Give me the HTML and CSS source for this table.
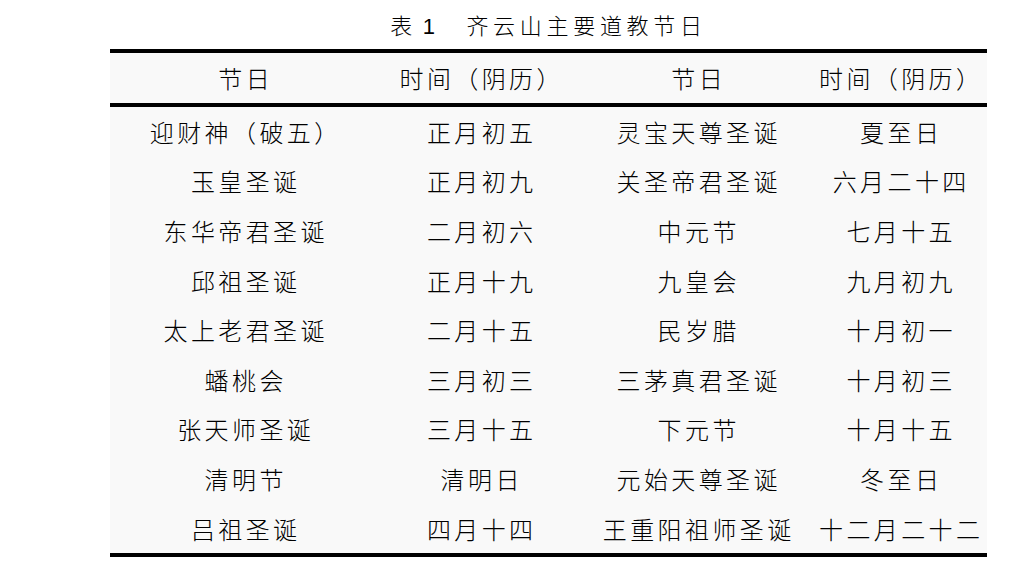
FILE: index.html
```html
<!DOCTYPE html>
<html lang="zh-CN">
<head>
<meta charset="utf-8">
<title>齐云山主要道教节日</title>
<link rel="stylesheet" href="styles.css">
</head>
<body>
<div class="page">
  <h1 class="caption">表 1　齐云山主要道教节日</h1>
  <table class="fest">
    <colgroup>
      <col class="c1"><col class="c2"><col class="c3"><col class="c4">
    </colgroup>
    <thead>
      <tr><th>节日</th><th>时间（阴历）</th><th>节日</th><th>时间（阴历）</th></tr>
    </thead>
    <tbody>
      <tr><td>迎财神（破五）</td><td>正月初五</td><td>灵宝天尊圣诞</td><td>夏至日</td></tr>
      <tr><td>玉皇圣诞</td><td>正月初九</td><td>关圣帝君圣诞</td><td>六月二十四</td></tr>
      <tr><td>东华帝君圣诞</td><td>二月初六</td><td>中元节</td><td>七月十五</td></tr>
      <tr><td>邱祖圣诞</td><td>正月十九</td><td>九皇会</td><td>九月初九</td></tr>
      <tr><td>太上老君圣诞</td><td>二月十五</td><td>民岁腊</td><td>十月初一</td></tr>
      <tr><td>蟠桃会</td><td>三月初三</td><td>三茅真君圣诞</td><td>十月初三</td></tr>
      <tr><td>张天师圣诞</td><td>三月十五</td><td>下元节</td><td>十月十五</td></tr>
      <tr><td>清明节</td><td>清明日</td><td>元始天尊圣诞</td><td>冬至日</td></tr>
      <tr><td>吕祖圣诞</td><td>四月十四</td><td>王重阳祖师圣诞</td><td>十二月二十二</td></tr>
    </tbody>
  </table>
</div>
</body>
</html>
```

FILE: styles.css
```css
html, body {
  margin: 0;
  padding: 0;
  background: #ffffff;
}

.page {
  width: 877px;
  margin-left: 110px;
  padding-top: 13px;
}

.caption {
  margin: 0 0 8px 0;
  height: 28px;
  line-height: 28px;
  font-family: "Liberation Sans", "Noto Sans CJK SC", sans-serif;
  font-size: 22px;
  font-weight: 300;
  letter-spacing: 4.7px;
  word-spacing: -5px;
  text-align: center;
  color: #000000;
}

.fest {
  width: 877px;
  border-collapse: collapse;
  table-layout: fixed;
  background: #f9f9f9;
  border-top: 4px solid #000000;
  border-bottom: 4px solid #000000;
  font-family: "Noto Sans CJK SC", sans-serif;
  font-weight: 300;
  font-size: 24px;
  color: #000000;
}

.c1 { width: 268px; }
.c2 { width: 204px; }
.c3 { width: 230px; }
.c4 { width: 175px; }

.fest th,
.fest td {
  padding: 0 0 0 3.4px;
  text-align: center;
  white-space: nowrap;
  letter-spacing: 3.4px;
  font-weight: 300;
  line-height: 1;
}

.fest th {
  height: 50px;
}

.fest thead tr {
  border-bottom: 4px solid #000000;
}

.fest td {
  height: 49.6px;
}
```
